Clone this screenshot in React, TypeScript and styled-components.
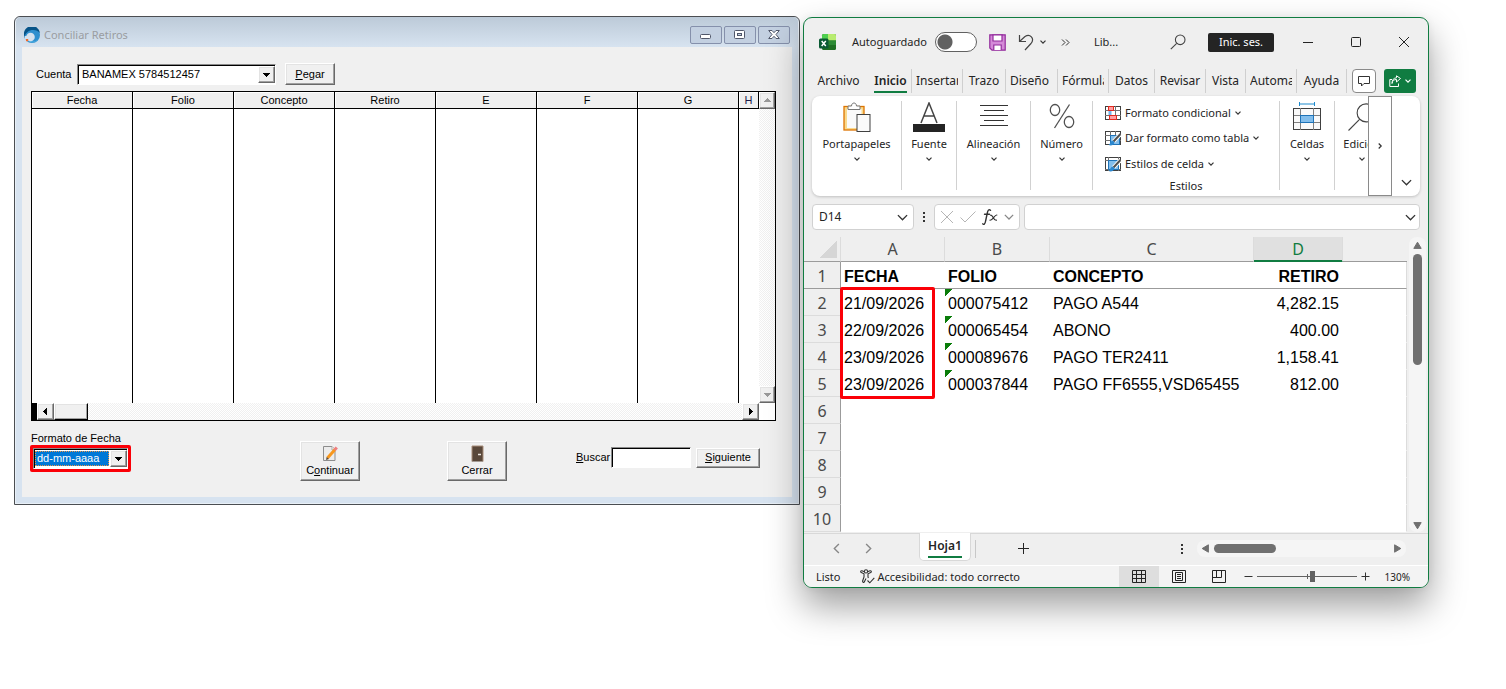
import React from "react";
import styled, { createGlobalStyle, css } from "styled-components";

const GlobalStyle = createGlobalStyle`
  *, *::before, *::after { box-sizing: border-box; }
  body { margin: 0; background: #fff; }
  button, input, select { font: inherit; color: inherit; margin: 0; border-radius: 0; }
  svg { display: block; flex: none; }
`;

const win32 = `"Liberation Sans", Arial, sans-serif`;
const office = `"Noto Sans", "Open Sans", sans-serif`;

const Desktop = styled.main`
  display: grid;
  grid-template-columns: 786fr 626fr;
  align-items: start;
  gap: 3px;
  padding: 16px 77px 80px 14px;
`;

/* ---------- Conciliar Retiros ---------- */

const Dialog = styled.section`
  min-width: 0;
  border: 1px solid #4b4e52;
  border-radius: 6px 6px 0 0;
  background: #d7e3f0;
  padding: 0 7px 7px;
  font: 11px/13px ${win32};
  color: #000;
  box-shadow: inset 0 0 0 1px #e9f0f7;
`;

const DialogTitle = styled.header`
  display: flex;
  align-items: center;
  height: 30px;
  margin: 0 -6px;
  padding: 6px 8px 0 8px;
  border-radius: 5px 5px 0 0;
  background: linear-gradient(#bccad8, #d7e3f0);
  h1 {
    flex: 1;
    margin: 0 0 0 4px;
    font: 11px/16px ${office};
    color: #9a9da1;
  }
`;

const Caption = styled.div`
  display: flex;
  gap: 2px;
  button {
    display: grid;
    place-items: center;
    width: 32px;
    height: 18px;
    padding: 0;
    border: 1px solid #8590ab;
    border-radius: 2px;
    background: #c3d0e1;
  }
`;

const Client = styled.div`
  background: #f0f0f0;
  padding: 16px 16px 16px 9px;
`;

const raised = css`
  border: 1px solid;
  border-color: #fff #696969 #696969 #fff;
  background: #f0f0f0;
  box-shadow: inset -1px -1px #a0a0a0, inset 1px 1px #e3e3e3;
`;

const sunken = css`
  border: 1px solid;
  border-color: #8a8a8a #fff #fff #8a8a8a;
  background: #fff;
  box-shadow: inset 1px 1px #000;
`;

const PushButton = styled.button<{ $w: number; $h: number }>`
  ${raised}
  display: flex;
  flex-direction: column;
  align-items: center;
  justify-content: center;
  gap: 2px;
  width: ${(p) => p.$w}px;
  height: ${(p) => p.$h}px;
  padding: 0;
`;

const AccountRow = styled.div`
  display: flex;
  align-items: center;
  gap: 9px;
  padding-left: 5px;
  margin-bottom: 6px;
  label { width: 32px; white-space: nowrap; }
`;

const Combo = styled.div<{ $w: number }>`
  ${sunken}
  display: flex;
  width: ${(p) => p.$w}px;
  height: 21px;
  padding: 1px 0 0 1px;
  select {
    flex: 1;
    min-width: 0;
    appearance: none;
    border: 0;
    outline: 0;
    padding: 0 3px;
    background: #fff;
  }
`;

const Tile = styled.span`
  ${raised}
  display: grid;
  place-items: center;
  flex: none;
  width: 17px;
  height: 17px;
`;

const Frame = styled.div`
  display: grid;
  grid-template-columns: 1fr 16px;
  border: 1px solid #000;
  background: #fff;
`;

const Records = styled.table`
  width: 100%;
  table-layout: fixed;
  border-collapse: separate;
  border-spacing: 0;
  th {
    height: 17px;
    padding: 0;
    font-weight: normal;
    background: #f0f0f0;
    border-right: 1px solid #000;
    border-bottom: 1px solid #000;
    box-shadow: inset 1px 1px #fff;
  }
  th:last-child { width: 20px; color: #1b1b4a; }
  td { height: 294px; padding: 0; border-right: 1px solid #000; }
  td:last-child { border-right: 0; }
`;

const dither = css`
  background: conic-gradient(#f0f0f0 25%, #fff 0 50%, #f0f0f0 0 75%, #fff 0) 0 0 / 2px 2px;
`;

const VTrack = styled.div`
  ${dither}
  display: flex;
  flex-direction: column;
  justify-content: space-between;
  span { width: 16px; }
`;

const HTrack = styled.div`
  ${dither}
  display: flex;
  height: 17px;
  border-left: 5px solid #000;
  span:last-child { margin-left: auto; }
`;

const HThumb = styled.div`
  ${raised}
  width: 34px;
  border-color: #fff #000 #000 #fff;
`;

const ActionRow = styled.div`
  display: grid;
  grid-template-columns: 269fr 147fr 129fr 200px;
  align-items: start;
  height: 60px;
  & > button { margin-top: 20px; }
`;

const DateFormat = styled.div`
  width: 100px;
  padding-top: 11px;
  label { display: block; white-space: nowrap; }
`;

const RedFrame = styled.div`
  margin-left: -1px;
  border: 3px solid #fb0007;
  border-radius: 2px;
  select {
    background: #0078d7;
    color: #fff;
    padding: 0 2px;
    margin: 1px 1px 2px 0;
    outline: 1px dotted #e8944a;
    outline-offset: -1px;
  }
`;

const Search = styled.div`
  display: flex;
  align-items: center;
  margin-top: 26px;
  label { width: 35px; }
  input {
    ${sunken}
    width: 80px;
    height: 21px;
    margin-right: 5px;
    padding: 0 3px;
    outline: 0;
  }
`;

/* ---------- Spreadsheet window ---------- */

const Book = styled.section`
  position: relative;
  min-width: 0;
  margin-top: 1px;
  overflow: hidden;
  border: 1px solid #107c41;
  border-radius: 9px;
  background: #efefef;
  color: #242424;
  font: 11px/14px ${office};
  box-shadow: 0 18px 36px rgba(0, 0, 0, 0.38), 0 0 8px rgba(0, 0, 0, 0.06);
`;

const Plain = styled.button`
  display: flex;
  align-items: center;
  justify-content: center;
  padding: 0;
  border: 0;
  background: none;
`;

const BookTitle = styled.header`
  display: flex;
  align-items: center;
  height: 48px;
  padding-left: 15px;
`;

const AutoSave = styled.label`
  display: flex;
  align-items: center;
  justify-content: space-between;
  width: 125px;
  margin-left: 16px;
  white-space: nowrap;
  input {
    appearance: none;
    width: 42px;
    height: 20px;
    border: 1px solid #616161;
    border-radius: 10px;
    background: radial-gradient(circle at 9px 9px, #616161 7px, transparent 8px) #fff;
  }
`;

const QuickTool = styled(Plain)<{ $w: number }>`
  width: ${(p) => p.$w}px;
  height: 28px;
`;

const FileName = styled.span`
  flex: 1;
  padding-left: 15px;
`;

const SignIn = styled(Plain)`
  width: 66px;
  height: 19px;
  margin: 0 10px 0 15px;
  border-radius: 2px;
  background: #242424;
  color: #fff;
`;

const Tabs = styled.nav`
  display: flex;
  align-items: center;
  height: 30px;
  padding-left: 3px;
  font-size: 12px;
`;

const Tab = styled.button<{ $w: number; $line?: boolean; $active?: boolean; $clip?: boolean }>`
  width: ${(p) => p.$w}px;
  height: 24px;
  padding: 0 4px;
  border: 0;
  border-right: ${(p) => (p.$line ? "1px solid #cfcfcf" : "0")};
  background: none;
  white-space: nowrap;
  span {
    display: flex;
    align-items: center;
    justify-content: ${(p) => (p.$clip ? "flex-start" : "center")};
    height: 24px;
    overflow: hidden;
    font-weight: ${(p) => (p.$active ? 600 : 400)};
    box-shadow: ${(p) => (p.$active ? "inset 0 -2px #107c41" : "none")};
  }
`;

const Comments = styled(Plain)`
  width: 24px;
  height: 24px;
  margin: 0 8px 0 5px;
  border: 1px solid #8a8a8a;
  border-radius: 4px;
  background: #fff;
`;

const Share = styled(Plain)`
  gap: 4px;
  width: 32px;
  height: 24px;
  border-radius: 3px;
  background: #107c41;
`;

const Ribbon = styled.div`
  display: flex;
  height: 100px;
  margin: 0 8px;
  border-radius: 8px;
  background: #fff;
  box-shadow: 0 1px 3px rgba(0, 0, 0, 0.2);
`;

const Group = styled.div<{ $w: number }>`
  width: ${(p) => p.$w}px;
  margin: 5px 0 6px;
  overflow: hidden;
  border-right: 1px solid #d1d1d1;
  &:last-of-type { border-right: 0; }
`;

const BigTool = styled(Plain)`
  flex-direction: column;
  justify-content: flex-start;
  width: 100%;
  min-width: 54px;
  padding-top: 1px;
  white-space: nowrap;
  svg + span { margin: 5px 0; }
`;

const Styles = styled(Group)`
  flex: 1;
  display: flex;
  flex-direction: column;
  padding-left: 12px;
  p { margin: 2px 0 0; text-align: center; padding-right: 12px; }
`;

const SmallTool = styled(Plain)`
  flex: none;
  justify-content: flex-start;
  gap: 4px;
  height: 26px;
  white-space: nowrap;
  &:first-child { height: 24px; }
`;

const More = styled(Plain)`
  width: 24px;
  border: 1px solid #8a8a8a;
`;

const Collapse = styled(Plain)`
  align-items: flex-end;
  width: 28px;
  padding-bottom: 8px;
`;

const FormulaBar = styled.div`
  display: flex;
  align-items: center;
  height: 41px;
  padding: 1px 8px 0;
`;

const Box = styled.div<{ $w?: number }>`
  display: flex;
  align-items: center;
  justify-content: space-between;
  ${(p) => (p.$w ? css`width: ${p.$w}px;` : css`flex: 1;`)}
  height: 26px;
  padding: 0 5px;
  border: 1px solid #d1d1d1;
  border-radius: 4px;
  background: #fff;
  input {
    flex: 1;
    width: 0;
    padding: 0 1px;
    border: 0;
    outline: 0;
    background: none;
    font-size: 12px;
  }
`;

const Formula = styled(Box)`
  margin-left: 4px;
  padding-right: 3px;
`;

const Dots = styled.div`
  display: grid;
  place-items: center;
  width: 20px;
`;

const SheetArea = styled.div`
  display: flex;
  padding-bottom: 1px;
  border-bottom: 1px solid #d8d8d8;
`;

const Sheet = styled.table`
  flex: 1;
  width: 0;
  table-layout: fixed;
  border-collapse: separate;
  border-spacing: 0;
  background: #fff;
  font: 16px/22px ${win32};
  color: #000;
  thead th {
    height: 25px;
    line-height: 24px;
    border-right: 1px solid #dcdcdc;
    border-bottom: 1px solid #9b9b9b;
  }
  thead th:last-child { border-right: 0; }
  th {
    padding: 0;
    background: #efefef;
    color: #4a4a4a;
    font-family: ${office};
    font-weight: normal;
  }
  tbody th {
    padding-top: 2px;
    line-height: 24px;
    border-right: 1px solid #9b9b9b;
    border-bottom: 1px solid #dcdcdc;
  }
  tbody td { border-right: 0; border-bottom: 1px solid transparent; }
  tbody td:last-child { border-right: 1px solid #dcdcdc; }
  tbody tr:first-child > * {
    border-bottom: 1px solid #9b9b9b;
  }
  tbody tr:first-child td { font-weight: bold; }
`;

const HeadCell = styled.th<{ $w?: number; $on?: boolean }>`
  ${(p) => p.$w && css`width: ${p.$w}px;`}
  ${(p) =>
    p.$on &&
    css`
      && {
        background: #e0e0e0;
        color: #107c41;
        border-bottom-color: #107c41;
        box-shadow: inset 0 -1px #107c41;
      }
    `}
`;

const Corner = styled.div`
  width: 18px;
  height: 17px;
  margin: 4px 3px 3px auto;
  background: linear-gradient(135deg, transparent 50%, #d6d6d6 50%);
`;

const Cell = styled.td<{ $right?: boolean; $mark?: boolean }>`
  position: relative;
  height: 27px;
  padding: 4px 4px 0 3px;
  white-space: nowrap;
  text-align: ${(p) => (p.$right ? "right" : "left")};
  ${(p) =>
    p.$mark &&
    css`
      background: linear-gradient(135deg, #0a7d0a 50%, transparent 50%) 0 0 / 8px 8px no-repeat;
    `}
`;

const RedOutline = styled.div`
  position: absolute;
  z-index: 1;
  top: -2px;
  left: -1px;
  width: 95px;
  height: 112px;
  border: 3px solid #fb0007;
  border-radius: 2px;
`;

const VScroll = styled.div`
  display: flex;
  flex-direction: column;
  align-items: center;
  width: 17px;
  margin: 0 2px;
  padding: 4px 0 2px;
  border-radius: 8px;
  background: #f5f5f5;
  i { width: 9px; height: 111px; margin: 4px 0 auto; border-radius: 5px; background: #707070; }
`;

const SheetBar = styled.div`
  display: flex;
  align-items: flex-start;
  height: 31px;
`;

const SheetNav = styled(Plain)<{ $w: number }>`
  width: ${(p) => p.$w}px;
  height: 28px;
`;

const Leading = styled.span`
  padding-left: 16px;
`;

const Grip = styled.div`
  display: flex;
  justify-content: flex-end;
  flex: 1;
  padding: 10px 9px 0 0;
`;

const SheetTab = styled(Plain)`
  width: 52px;
  height: 28px;
  margin-left: 35px;
  margin-top: -1px;
  border: 1px solid #d8d8d8;
  border-top: 0;
  border-radius: 0 0 5px 5px;
  background: #fff;
  font-size: 12px;
  font-weight: 600;
  span { line-height: 20px; border-bottom: 2px solid #107c41; }
`;

const Rule = styled.div`
  width: 1px;
  height: 18px;
  margin: 6px 0 0 4px;
  background: #c8c8c8;
`;

const HScroll = styled.div`
  display: flex;
  align-items: center;
  justify-content: space-between;
  width: 209px;
  height: 17px;
  margin: 6px 22px 0 5px;
  padding: 0 4px;
  border-radius: 8px;
  background: #f5f5f5;
  i { width: 62px; height: 9px; margin: 0 auto 0 4px; border-radius: 5px; background: #707070; }
`;

const Status = styled.footer`
  display: flex;
  align-items: center;
  height: 22px;
  padding: 0 18px 0 12px;
  border-top: 1px solid #fff;
  background: #f3f3f3;
`;

const Access = styled.span`
  display: flex;
  align-items: center;
  gap: 3px;
  flex: 1;
  margin-left: 19px;
  white-space: nowrap;
`;

const View = styled(Plain)<{ $on?: boolean }>`
  width: 40px;
  height: 21px;
  background: ${(p) => (p.$on ? "#dedede" : "none")};
`;

const Zoom = styled.div`
  display: flex;
  align-items: center;
  gap: 4px;
  margin-left: 5px;
  input {
    appearance: none;
    width: 100px;
    height: 12px;
    margin: 0;
    background:
      linear-gradient(#616161, #616161) 50px 50% / 1px 5px no-repeat,
      linear-gradient(#616161, #616161) 0 50% / 100% 1px no-repeat;
  }
  input::-webkit-slider-thumb {
    appearance: none;
    width: 5px;
    height: 11px;
    background: #616161;
  }
  output { width: 30px; margin-left: 6px; font-size: 10px; text-align: right; }
`;

/* ---------- Drawings ---------- */

const Arrow = ({ d = "down", c = "#000" }: { d?: "down" | "up" | "left" | "right"; c?: string }) => {
  const pts = { down: "0,2 7,2 3.5,6", up: "0,5 7,5 3.5,1", left: "5,0 5,7 1,3.5", right: "2,0 2,7 6,3.5" };
  return (
    <svg width="7" height="7" viewBox="0 0 7 7" shapeRendering="crispEdges">
      <polygon points={pts[d]} fill={c} />
    </svg>
  );
};

const Chevron = ({ s = 6, c = "#333", r = 0 }: { s?: number; c?: string; r?: number }) => (
  <svg width={s} height={s} viewBox="0 0 6 6" fill="none" stroke={c} strokeWidth={s > 8 ? 0.75 : 1.2}>
    <path d="M.5 1.7 3 4.2 5.5 1.7" transform={`rotate(${r} 3 3)`} />
  </svg>
);

const Triangle = ({ r = 0 }: { r?: number }) => (
  <svg width="9" height="9" viewBox="0 0 9 9">
    <path d="M4.5 1.2 8.2 7.4H.8Z" fill="#707070" stroke="#707070" strokeLinejoin="round" transform={`rotate(${r} 4.5 4.5)`} />
  </svg>
);

const AppLogo = () => (
  <svg width="16" height="16" viewBox="0 0 16 16">
    <circle cx="8" cy="8" r="8" fill="#2f8fce" />
    <path d="M0 8A8 8 0 0 1 16 6C13 2.500 7 2 3.500 5 1.500 6.500 1 8 .8 9.500Z" fill="#075488" />
    <path d="M4 14A8 8 0 0 0 15 12C11 15.500 7 15 4 12Z" fill="#4db0e4" />
    <circle cx="6.500" cy="10" r="4.300" fill="#d5e1ee" />
    <path d="M1 9h3l-1 5-2-2Z" fill="#d5e1ee" />
    <rect x="2" y="12" width="2.200" height="2.200" fill="#f26a2a" />
  </svg>
);

const WinGlyph = ({ kind }: { kind: "min" | "max" | "close" }) => (
  <svg width="12" height="10" viewBox="0 0 12 10" fill="#fff" stroke="#50576a">
    {kind === "min" && <rect x=".5" y="4.500" width="10" height="4" rx="1" />}
    {kind === "max" && (
      <>
        <rect x=".5" y=".5" width="10" height="8" rx="1" />
        <rect x="3.500" y="3.500" width="4" height="2" fill="#c3d0e1" />
      </>
    )}
    {kind === "close" && (
      <path d="M.7.5H4L6 2.700 8 .5H11.300L8 4.500 11.300 8.500H8L6 6.300 4 8.500H.7L4 4.500Z" />
    )}
  </svg>
);

const NoteIcon = () => (
  <svg width="17" height="17" viewBox="0 0 17 17">
    <path d="M1.500 1.500H10L13 4.500V15.500H1.500Z" fill="#ececec" stroke="#8d8d8d" />
    <path d="M10 1.500V5H13" fill="#fff" stroke="#aaa" />
    <path d="M5.500 13 13 4.500" stroke="#f7971d" strokeWidth="3" />
    <path d="M12.500 5 14.800 2.400" stroke="#ef7f7f" strokeWidth="3" />
    <path d="M4 15 4.700 12 7 14Z" fill="#5a4a3a" />
  </svg>
);

const DoorIcon = () => (
  <svg width="13" height="17" viewBox="0 0 13 17">
    <path d="M1 16.500V1H12V16.500" fill="#594739" stroke="#a78c78" />
    <path d="M7 9.500H10" stroke="#ece6e0" strokeWidth="1.500" />
  </svg>
);

const ExcelIcon = () => (
  <svg width="17" height="17" viewBox="0 0 17 17">
    <rect x="3" y="0" width="14" height="16" rx="1.500" fill="#1e6e22" />
    <path d="M3 6.500V1.500Q3 0 4.500 0H9V6.500Z" fill="#4fcf4f" />
    <path d="M9 0H15.500Q17 0 17 1.500V6.500H9Z" fill="#b8ec70" />
    <rect x="9" y="6.500" width="8" height="4.500" fill="#2c8a34" />
    <rect x="0" y="4.500" width="9.500" height="10" rx="1.500" fill="#0b5a34" />
    <path d="M2.700 7 6.800 12M6.800 7 2.700 12" stroke="#fff" strokeWidth="1.500" />
  </svg>
);

const SaveIcon = () => (
  <svg width="17" height="17" viewBox="0 0 17 17" stroke="#922a9c" strokeWidth="1.200">
    <path d="M.8.8H16.200V16.200H3L.8 14Z" fill="#d48ad8" />
    <path d="M4 .8H13V7H4Z" fill="#fff" />
    <path d="M4.800 16V11H12.200V16" fill="#fff" />
  </svg>
);

const UndoIcon = () => (
  <svg width="17" height="17" viewBox="0 0 17 17" fill="none" stroke="#444" strokeWidth="1.200">
    <path d="M1.500 1V7.500H8M1.800 7.200 7 2.500C12 -1 17 4.500 13 9.500L7 16" />
  </svg>
);

const MagnifyIcon = ({ size = 16, w = 1.1 }: { size?: number; w?: number }) => (
  <svg width={size} height={size} viewBox="0 0 16 16" fill="none" stroke="#444" strokeWidth={w}>
    <circle cx="10.200" cy="5.800" r="4.800" />
    <path d="M6.700 9.300.8 15.200" />
  </svg>
);

const FrameIcon = ({ d }: { d: string }) => (
  <svg width="12" height="12" viewBox="0 0 12 12" fill="none" stroke="#242424">
    <path d={d} />
  </svg>
);

const CommentIcon = () => (
  <svg width="12" height="12" viewBox="0 0 12 12" fill="none" stroke="#333">
    <path d="M.5 1.500H11.500V8.500H6L3.500 11V8.500H.5Z" />
  </svg>
);

const ShareIcon = () => (
  <svg width="12" height="12" viewBox="0 0 12 12" fill="none" stroke="#fff">
    <path d="M3 4.500H.8V11.500H9.500V8.500M3 8.500C3.500 5.500 5 4.500 7.500 4.500V7L11.500 3.500 7.500.8V2.800C4.500 3 3 5 3 8.500Z" />
  </svg>
);

const ClipboardIcon = () => (
  <svg width="28" height="30" viewBox="0 0 28 30">
    <rect x="1" y="4.500" width="20" height="23.500" fill="#f9d98c" stroke="#dd7400" strokeWidth="1.300" />
    <rect x="4" y="7" width="14.500" height="19" fill="#fafafa" />
    <path d="M5 7.500V4H8.500C8.500 0 13.500 0 13.500 4H17V7.500Z" fill="#fff" stroke="#777" />
    <rect x="14" y="12.500" width="13" height="17" fill="#fafafa" stroke="#404040" />
  </svg>
);

const FontIcon = () => (
  <svg width="32" height="30" viewBox="0 0 32 30">
    <path d="M8 21 16 1 24 21M10.800 14H21.200" fill="none" stroke="#444" strokeWidth="1.500" />
    <rect y="22" width="32" height="8" fill="#242424" />
  </svg>
);

const AlignIcon = () => (
  <svg width="28" height="30" viewBox="0 0 28 30" stroke="#333">
    <path d="M0 3.500H28M4 8.500H24M0 13.500H28M4 18.500H24M0 23.500H28" />
  </svg>
);

const PercentIcon = () => (
  <svg width="26" height="30" viewBox="0 0 26 30" fill="none" stroke="#505050" strokeWidth="1.300">
    <ellipse cx="6" cy="8" rx="4.700" ry="5.500" />
    <ellipse cx="20" cy="20" rx="4.700" ry="5.500" />
    <path d="M20.500 2.500 5.500 26" />
  </svg>
);

const CellsIcon = () => (
  <svg width="28" height="30" viewBox="0 0 28 30">
    <path d="M6.500 0V4M21.500 0V4M6.500 2H21.500" stroke="#1e8bcd" fill="none" />
    <rect x=".5" y="6.500" width="27" height="21" fill="#fafafa" stroke="#404040" />
    <path d="M7.500 6V28M20.500 6V28M1 13.500H27M1 20.500H27" stroke="#808080" />
    <rect x="7.500" y="13.500" width="13" height="7" fill="#83beec" stroke="#1e73b8" />
  </svg>
);

const GridIcon = ({ kind }: { kind: "cond" | "table" | "cell" }) => (
  <svg width="16" height="15" viewBox="0 0 16 15">
    <rect x=".5" y=".5" width="15" height="13" fill="#fff" stroke="#404040" />
    <path d={kind === "cell" ? "M3.500 0V14M13.500 0V14M0 3.500H16M0 12.500H16" : "M5.500 0V14M10.500 0V14M0 4.500H16M0 9.500H16"} stroke="#707070" />
    {kind === "cond" ? (
      <>
        <rect x="3.500" y=".5" width="5" height="4" fill="#ff9da0" stroke="#e02b20" />
        <rect x="3.500" y="5" width="3" height="4" fill="#70b6ee" />
        <rect x="4.500" y="9.500" width="7" height="4" fill="#ff9da0" stroke="#e02b20" />
      </>
    ) : (
      <>
        {kind === "table" ? (
          <path d="M5.500 4.500H14.500V13.500H5.500Z" fill="#83beec" stroke="#1e73b8" />
        ) : (
          <path d="M3.500 3.500H13.500V12.500H3.500Z" fill="#83beec" stroke="#1e73b8" />
        )}
        <path d="M15.500 3 8.500 10.500" stroke="#fff" strokeWidth="4" />
        <path d="M15.500 3 8.500 10.500" stroke="#505050" strokeWidth="2" />
        <path d="M9.500 11C9 14 6.500 15 3.500 14 5.500 13 5 10.500 7.500 9.500Z" fill="#2b88d0" />
      </>
    )}
  </svg>
);

const DotsIcon = () => (
  <svg width="2" height="10" viewBox="0 0 2 10" fill="#333">
    <path d="M0 0H2V2H0ZM0 4H2V6H0ZM0 8H2V10H0Z" />
  </svg>
);

const FxIcon = () => (
  <svg width="16" height="18" viewBox="0 0 16 18" fill="none" stroke="#333" strokeLinecap="round">
    <path d="M8.500 2.200C6.800.8 5.800 2.500 5.300 5L3.600 13C3 16.500 1.700 17 .8 15.800M2.500 6.200H7.500" strokeWidth="1.400" />
    <path d="M8.500 7.200C11 6 11 13 14.500 12.200M14.800 7C12.800 6.500 10.500 12.800 8 12.200" strokeWidth="1.200" />
  </svg>
);

const AccessIcon = () => (
  <svg width="15" height="15" viewBox="0 0 15 15" fill="none" stroke="#333" strokeWidth="1.100">
    <circle cx="6" cy="2.400" r="1.600" />
    <path d="M4.400 2.800 2 1.800C.5 1.500.3 3.200 1.300 3.600L4 4.800V8L2.600 12C2.400 13.600 4 13.800 4.400 12.700L6 9.500M7.600 2.800 10 1.800C11.500 1.500 11.700 3.200 10.700 3.600L8 4.800V8L8.400 9M7.500 11.500 9.800 13.800 14.300 8.800" />
  </svg>
);

const ViewIcon = ({ d }: { d: string }) => (
  <svg width="14" height="13" viewBox="0 0 14 13" fill="none" stroke="#242424">
    <path d={d} />
  </svg>
);

/* ---------- Data ---------- */

const recordColumns = ["Fecha", "Folio", "Concepto", "Retiro", "E", "F", "G", "H"];

const tabs = [
  { name: "Archivo", w: 63 },
  { name: "Inicio", w: 42, line: true, active: true },
  { name: "Insertar", w: 51, line: true, clip: true },
  { name: "Trazo", w: 43, line: true },
  { name: "Diseño", w: 52, line: true, clip: true },
  { name: "Fórmula", w: 51, line: true, clip: true },
  { name: "Datos", w: 46, line: true },
  { name: "Revisar", w: 51, line: true },
  { name: "Vista", w: 40, line: true },
  { name: "Automa", w: 51, line: true, clip: true },
  { name: "Ayuda", w: 50, line: true },
];

const sheetRows = [
  ["FECHA", "FOLIO", "CONCEPTO", "RETIRO"],
  ["21/09/2026", "000075412", "PAGO A544", "4,282.15"],
  ["22/09/2026", "000065454", "ABONO", "400.00"],
  ["23/09/2026", "000089676", "PAGO TER2411", "1,158.41"],
  ["23/09/2026", "000037844", "PAGO FF6555,VSD65455", "812.00"],
  ...Array.from({ length: 5 }, () => ["", "", "", ""]),
];

/* ---------- Windows ---------- */

const WithdrawalsDialog = () => (
  <Dialog>
    <DialogTitle>
      <AppLogo />
      <h1>Conciliar Retiros</h1>
      <Caption>
        <button aria-label="Minimizar"><WinGlyph kind="min" /></button>
        <button aria-label="Maximizar"><WinGlyph kind="max" /></button>
        <button aria-label="Cerrar ventana"><WinGlyph kind="close" /></button>
      </Caption>
    </DialogTitle>
    <Client>
      <AccountRow>
        <label htmlFor="account">Cuenta</label>
        <Combo $w={199}>
          <select id="account"><option>BANAMEX 5784512457</option></select>
          <Tile><Arrow /></Tile>
        </Combo>
        <PushButton $w={50} $h={22}><span><u>P</u>egar</span></PushButton>
      </AccountRow>
      <Frame>
        <Records>
          <thead>
            <tr>{recordColumns.map((c) => <th key={c}>{c}</th>)}</tr>
          </thead>
          <tbody>
            <tr>{recordColumns.map((c) => <td key={c} />)}</tr>
          </tbody>
        </Records>
        <VTrack>
          <Tile><Arrow d="up" c="#999" /></Tile>
          <Tile><Arrow c="#999" /></Tile>
        </VTrack>
        <HTrack>
          <Tile><Arrow d="left" /></Tile>
          <HThumb />
          <Tile><Arrow d="right" /></Tile>
        </HTrack>
      </Frame>
      <ActionRow>
        <DateFormat>
          <label htmlFor="format">Formato de Fecha</label>
          <RedFrame>
            <Combo $w={95}>
              <select id="format"><option>dd-mm-aaaa</option></select>
              <Tile><Arrow /></Tile>
            </Combo>
          </RedFrame>
        </DateFormat>
        <PushButton $w={60} $h={40}><NoteIcon /><span>C<u>o</u>ntinuar</span></PushButton>
        <PushButton $w={60} $h={40}><DoorIcon /><span>Cerrar</span></PushButton>
        <Search>
          <label htmlFor="search"><u>B</u>uscar</label>
          <input id="search" />
          <PushButton $w={64} $h={20}><span><u>S</u>iguiente</span></PushButton>
        </Search>
      </ActionRow>
    </Client>
  </Dialog>
);

const Big = ({ icon, text }: { icon: React.ReactNode; text: string }) => (
  <BigTool>{icon}<span>{text}</span><Chevron /></BigTool>
);

const SpreadsheetWindow = () => (
  <Book>
    <BookTitle>
      <ExcelIcon />
      <AutoSave>Autoguardado<input type="checkbox" /></AutoSave>
      <QuickTool $w={40} aria-label="Guardar"><SaveIcon /></QuickTool>
      <QuickTool $w={18} aria-label="Deshacer"><UndoIcon /></QuickTool>
      <QuickTool $w={16} aria-label="Opciones de deshacer"><Chevron /></QuickTool>
      <QuickTool $w={28} aria-label="Más comandos">
        <svg width="9" height="7" viewBox="0 0 9 7" fill="none" stroke="#333">
          <path d="M1 .5 4 3.500 1 6.500M5 .5 8 3.500 5 6.500" />
        </svg>
      </QuickTool>
      <FileName>Lib...</FileName>
      <QuickTool $w={30} aria-label="Buscar"><MagnifyIcon /></QuickTool>
      <SignIn>Inic. ses.</SignIn>
      <QuickTool $w={48} aria-label="Minimizar"><FrameIcon d="M1 6.500H11" /></QuickTool>
      <QuickTool $w={48} aria-label="Maximizar"><FrameIcon d="M1.500 2.500Q1.500 1.500 2.500 1.500H9.500Q10.500 1.500 10.500 2.500V9.500Q10.500 10.500 9.500 10.500H2.500Q1.500 10.500 1.500 9.500Z" /></QuickTool>
      <QuickTool $w={48} aria-label="Cerrar"><FrameIcon d="M1 1 11 11M11 1 1 11" /></QuickTool>
    </BookTitle>
    <Tabs>
      {tabs.map((t) => (
        <Tab key={t.name} $w={t.w} $line={t.line} $active={t.active} $clip={t.clip}><span>{t.name}</span></Tab>
      ))}
      <Comments aria-label="Comentarios"><CommentIcon /></Comments>
      <Share aria-label="Compartir"><ShareIcon /><Chevron c="#fff" /></Share>
    </Tabs>
    <Ribbon>
      <Group $w={90}><Big icon={<ClipboardIcon />} text="Portapapeles" /></Group>
      <Group $w={55}><Big icon={<FontIcon />} text="Fuente" /></Group>
      <Group $w={74}><Big icon={<AlignIcon />} text="Alineación" /></Group>
      <Group $w={62}><Big icon={<PercentIcon />} text="Número" /></Group>
      <Styles $w={187}>
        <SmallTool><GridIcon kind="cond" />Formato condicional<Chevron /></SmallTool>
        <SmallTool><GridIcon kind="table" />Dar formato como tabla<Chevron /></SmallTool>
        <SmallTool><GridIcon kind="cell" />Estilos de celda<Chevron /></SmallTool>
        <p>Estilos</p>
      </Styles>
      <Group $w={55}><Big icon={<CellsIcon />} text="Celdas" /></Group>
      <Group $w={33}><Big icon={<MagnifyIcon size={30} w={0.6} />} text="Edición" /></Group>
      <More aria-label="Más opciones"><Chevron r={-90} /></More>
      <Collapse aria-label="Contraer cinta"><Chevron s={11} /></Collapse>
    </Ribbon>
    <FormulaBar>
      <Box $w={102}><input aria-label="Cuadro de nombres" defaultValue="D14" /><Chevron s={11} /></Box>
      <Dots><DotsIcon /></Dots>
      <Box $w={86}>
        <svg width="14" height="14" viewBox="0 0 14 14" fill="none" stroke="#b5b5b5"><path d="M1 1 13 13M13 1 1 13" /></svg>
        <svg width="16" height="12" viewBox="0 0 16 12" fill="none" stroke="#b5b5b5"><path d="M.5 6.500 5 11 15.500.5" /></svg>
        <FxIcon />
        <Chevron s={10} c="#888" />
      </Box>
      <Formula><input aria-label="Barra de fórmulas" /><Chevron s={11} /></Formula>
    </FormulaBar>
    <SheetArea>
      <Sheet>
        <thead>
          <tr>
            <HeadCell $w={37}><Corner /></HeadCell>
            <HeadCell $w={104}>A</HeadCell>
            <HeadCell $w={105}>B</HeadCell>
            <HeadCell $w={204}>C</HeadCell>
            <HeadCell $w={89} $on>D</HeadCell>
            <HeadCell />
          </tr>
        </thead>
        <tbody>
          {sheetRows.map((row, i) => (
            <tr key={i}>
              <th scope="row">{i + 1}</th>
              {row.map((v, j) => (
                <Cell key={j} $right={j === 3} $mark={j === 1 && i > 0 && v !== ""}>
                  {v}
                  {i === 1 && j === 0 && <RedOutline />}
                </Cell>
              ))}
              <Cell />
            </tr>
          ))}
        </tbody>
      </Sheet>
      <VScroll><Triangle /><i /><Triangle r={180} /></VScroll>
    </SheetArea>
    <SheetBar>
      <SheetNav $w={48} aria-label="Hoja anterior"><Leading><Chevron s={11} c="#888" r={90} /></Leading></SheetNav>
      <SheetNav $w={32} aria-label="Hoja siguiente"><Chevron s={11} c="#888" r={-90} /></SheetNav>
      <SheetTab><span>Hoja1</span></SheetTab>
      <Rule />
      <SheetNav $w={94} aria-label="Hoja nueva"><FrameIcon d="M6.500 1V12M1 6.500H12" /></SheetNav>
      <Grip><DotsIcon /></Grip>
      <HScroll><Triangle r={-90} /><i /><Triangle r={90} /></HScroll>
    </SheetBar>
    <Status>
      <span>Listo</span>
      <Access><AccessIcon />Accesibilidad: todo correcto</Access>
      <View $on aria-label="Normal"><ViewIcon d="M.5.5H13.500V12.500H.5ZM4.500.5V12.500M9.500.5V12.500M.5 4.500H13.500M.5 8.500H13.500" /></View>
      <View aria-label="Diseño de página"><ViewIcon d="M.5.5H13.500V12.500H.5ZM3.500 2.500H10.500V10.500H3.500ZM5 4.500H9M5 6.500H9M5 8.500H9" /></View>
      <View aria-label="Salto de página"><ViewIcon d="M.5.5H13.500V12.500H.5ZM4.500.5V7.500H9.500V.5M.5 7.500H5" /></View>
      <Zoom>
        <Plain aria-label="Alejar"><svg width="9" height="9" viewBox="0 0 9 9" stroke="#333"><path d="M.5 4.500H8.500" /></svg></Plain>
        <input type="range" aria-label="Zoom" min="0" max="100" defaultValue="56" />
        <Plain aria-label="Acercar"><svg width="9" height="9" viewBox="0 0 9 9" stroke="#333"><path d="M.5 4.500H8.500M4.500.5V8.500" /></svg></Plain>
        <output>130%</output>
      </Zoom>
    </Status>
  </Book>
);

export default function App() {
  return (
    <>
      <GlobalStyle />
      <Desktop>
        <WithdrawalsDialog />
        <SpreadsheetWindow />
      </Desktop>
    </>
  );
}
